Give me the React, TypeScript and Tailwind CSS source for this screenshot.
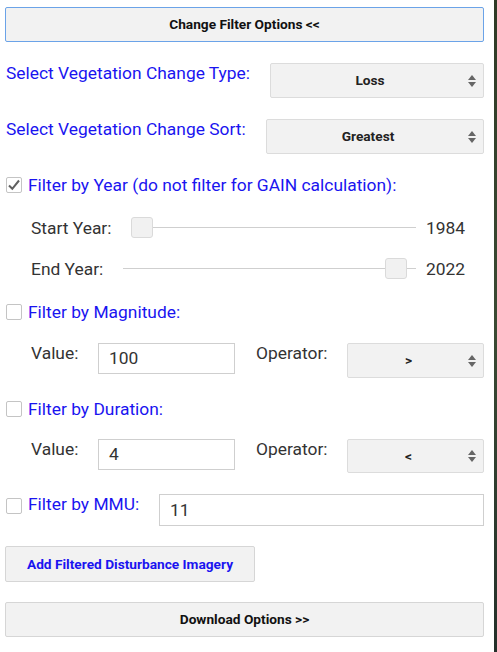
import React from "react";

const font = { fontFamily: "Roboto, 'Liberation Sans', sans-serif" };

function Arrows() {
  return (
    <svg width="10" height="16" viewBox="0 0 10 16" className="absolute right-[6px] top-1/2 -translate-y-1/2">
      <path d="M1 7 L5 2 L9 7 Z" fill="#666" />
      <path d="M1 9 L5 14 L9 9 Z" fill="#666" />
    </svg>
  );
}

function Select({ value, w, h = 35 }: { value: string; w: number; h?: number }) {
  return (
    <div
      className="relative flex items-center justify-center rounded-[2px] border border-[#dcdcdc] bg-[#f2f2f2] text-[13.7px] font-bold text-[#222]"
      style={{ width: w, height: h }}
    >
      <span className="pr-[14px]">{value}</span>
      <Arrows />
    </div>
  );
}

function Checkbox({ checked }: { checked?: boolean }) {
  return (
    <div className="relative h-[16px] w-[16px] shrink-0 rounded-[2px] border border-[#c4c4c4] bg-white">
      {checked && (
        <svg width="16" height="16" viewBox="0 0 16 16" className="absolute left-[-1px] top-[-1px]">
          <path d="M3 8.5 L6.3 11.8 L13 3.5" fill="none" stroke="#606060" strokeWidth="2" />
        </svg>
      )}
    </div>
  );
}

function Slider({ label, value, start }: { label: string; value: string; start: boolean }) {
  return (
    <div className="flex h-[21px] items-center pl-[26px]">
      <span className="text-[17.4px] leading-[20px] text-[#333]">{label}</span>
      <div className="relative ml-[20px] h-[21px] flex-1">
        <div className="absolute left-0 right-0 top-[10px] h-px bg-[#cfcfcf]" />
        <div
          className={`absolute top-0 h-[21px] w-[22px] rounded-[3px] border border-[#dadada] bg-[#f1f1f1] ${start ? "left-0" : "right-[9px]"}`}
        />
      </div>
      <span className="ml-[10px] w-[58px] text-[17.4px] leading-[20px] text-[#333]">{value}</span>
    </div>
  );
}

function Btn({ children, blue, w, h = 35 }: { children: React.ReactNode; blue?: boolean; w?: number; h?: number }) {
  return (
    <div
      className={`flex items-center justify-center rounded-[2px] border border-[#d6d6d6] bg-[#f2f2f2] text-[13.7px] font-bold ${blue ? "text-[#1a14f0]" : "text-[#111]"}`}
      style={{ width: w, height: h }}
    >
      {children}
    </div>
  );
}

const blueLabel = "text-[17.4px] leading-[20px] text-[#1a14f0]";
const grayLabel = "text-[17.4px] leading-[20px] text-[#333]";

export default function App() {
  return (
    <div className="flex h-[652px] w-[497px] overflow-hidden" style={font}>
      <div className="w-[494px] bg-white pl-[5px] pr-[10px] pt-[7px]">
        <div className="flex h-[35px] items-center justify-center rounded-[2px] border border-[#6ba3e8] bg-[#f2f2f2] text-[13.7px] font-bold text-[#111]">
          Change Filter Options &lt;&lt;
        </div>

        <div className="mt-[21px] flex items-start justify-between">
          <span className={`ml-[1px] ${blueLabel}`}>Select Vegetation Change Type:</span>
          <Select value="Loss" w={214} />
        </div>

        <div className="mt-[21px] flex items-start justify-between">
          <span className={`ml-[1px] ${blueLabel}`}>Select Vegetation Change Sort:</span>
          <Select value="Greatest" w={218} />
        </div>

        <div className="mt-[21px] flex h-[20px] items-center">
          <div className="ml-[1px]"><Checkbox checked /></div>
          <span className={`ml-[6px] ${blueLabel}`}>Filter by Year (do not filter for GAIN calculation):</span>
        </div>

        <div className="mt-[22px]">
          <Slider label="Start Year:" value="1984" start />
        </div>
        <div className="mt-[20px]">
          <Slider label="End Year:" value="2022" start={false} />
        </div>

        <div className="mt-[23px] flex h-[20px] items-center">
          <div className="ml-[1px]"><Checkbox /></div>
          <span className={`ml-[6px] ${blueLabel}`}>Filter by Magnitude:</span>
        </div>

        <div className="mt-[21px] flex items-start">
          <span className={`ml-[26px] w-[67px] ${grayLabel}`}>Value:</span>
          <div className="flex h-[31px] w-[137px] items-center border border-[#cfcfcf] bg-white pl-[10px] text-[17.4px] text-[#333]">100</div>
          <span className={`ml-[21px] ${grayLabel}`}>Operator:</span>
          <div className="ml-auto"><Select value=">" w={137} /></div>
        </div>

        <div className="mt-[21px] flex h-[20px] items-center">
          <div className="ml-[1px]"><Checkbox /></div>
          <span className={`ml-[6px] ${blueLabel}`}>Filter by Duration:</span>
        </div>

        <div className="mt-[20px] flex items-start">
          <span className={`ml-[26px] w-[67px] ${grayLabel}`}>Value:</span>
          <div className="flex h-[31px] w-[137px] items-center border border-[#cfcfcf] bg-white pl-[10px] text-[17.4px] text-[#333]">4</div>
          <span className={`ml-[21px] ${grayLabel}`}>Operator:</span>
          <div className="ml-auto"><Select value="<" w={137} h={34} /></div>
        </div>

        <div className="mt-[21px] flex items-start">
          <div className="ml-[1px] mt-[4px]"><Checkbox /></div>
          <span className={`ml-[6px] ${blueLabel}`}>Filter by MMU:</span>
          <div className="ml-auto flex h-[32px] w-[325px] items-center border border-[#cfcfcf] bg-white pl-[10px] text-[17.4px] text-[#333]">11</div>
        </div>

        <div className="mt-[20px]">
          <Btn blue w={250} h={36}>Add Filtered Disturbance Imagery</Btn>
        </div>

        <div className="mt-[20px]">
          <Btn>Download Options &gt;&gt;</Btn>
        </div>
      </div>
      <div className="w-[3px] bg-gradient-to-b from-[#2f3a26] via-[#3a4a33] to-[#24302a]" />
    </div>
  );
}
